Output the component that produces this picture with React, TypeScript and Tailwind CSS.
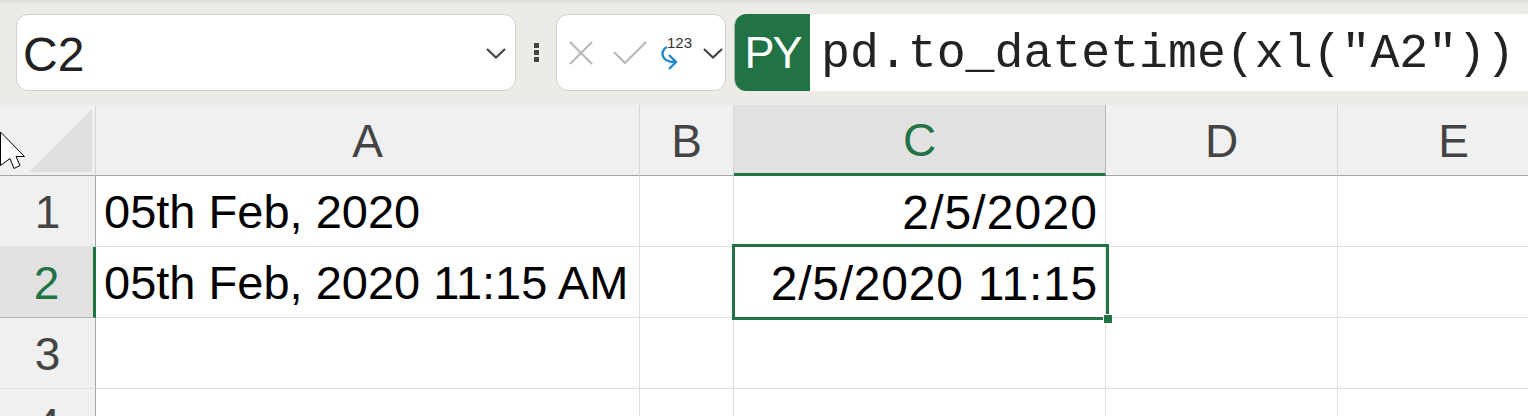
import React from "react";

const SANS = "font-['Liberation_Sans',sans-serif]";

const ColHeader = ({ label, active }: { label: string; active?: boolean }) => (
  <div
    className={
      active
        ? "flex items-center justify-center pt-[2px] bg-[#e1e1e1] border-r border-[#b5b5b5] border-b-[3px] border-b-[#217346] text-[#217346] text-[46px]"
        : "flex items-center justify-center pt-[2px] bg-[#f0f0f0] border-r border-[#d6d6d6] border-b border-b-[#a6a6a6] text-[#444444] text-[46px]"
    }
  >
    {label}
  </div>
);

const RowHeader = ({ label, active }: { label: string; active?: boolean }) => (
  <div
    className={
      active
        ? "flex items-center justify-center pt-[2px] bg-[#e1e1e1] border-r-[3px] border-[#217346] border-b border-b-[#b5b5b5] text-[#217346] text-[46px]"
        : "flex items-center justify-center pt-[2px] bg-[#f0f0f0] border-r border-[#a6a6a6] border-b border-b-[#e0e0e0] text-[#444444] text-[46px]"
    }
  >
    {label}
  </div>
);

const Cell = ({ children, right }: { children?: React.ReactNode; right?: boolean }) => (
  <div
    className={`flex items-center whitespace-nowrap overflow-visible pt-[3px] px-2 border-r border-b border-[#e0e0e0] text-black text-[47px] ${
      right ? "justify-end" : ""
    }`}
  >
    {children}
  </div>
);

const Chevron = () => (
  <svg width="22" height="14" viewBox="0 0 22 14" fill="none" stroke="#444444" strokeWidth="2.2">
    <path d="M2 3l9 8.500L20 3" />
  </svg>
);

const App = () => {
  return (
    <div className={`w-[1528px] h-[416px] overflow-hidden bg-white flex flex-col ${SANS}`}>
      {/* Formula bar */}
      <div className="relative h-[105px] shrink-0 bg-[#ecebe6] flex items-start pt-[14px] pl-4 shadow-[inset_0_5px_5px_-3px_#d8d8d4]">
        <div className="w-[500px] h-[77px] flex items-center justify-between bg-white border border-[#cfcfcf] rounded-xl pl-[6px] pr-2">
          <span className="text-[48px] pt-1 text-[#222222]">C2</span>
          <Chevron />
        </div>
        <div className="w-10 h-[77px] flex flex-col items-center justify-center gap-[2px] pb-[1px]">
          <span className="w-[5px] h-[5px] bg-[#444444]" />
          <span className="w-[5px] h-[5px] bg-[#444444]" />
          <span className="w-[5px] h-[5px] bg-[#444444]" />
        </div>
        <div className="relative w-[170px] h-[77px] flex items-center bg-white border border-[#cfcfcf] rounded-xl">
          <svg className="ml-[11px]" width="26" height="26" viewBox="0 0 26 26" fill="none" stroke="#b9b9b9" strokeWidth="2.2">
            <path d="M2 2l22 22M24 2L2 24" />
          </svg>
          <svg className="ml-[19px]" width="34" height="24" viewBox="0 0 34 24" fill="none" stroke="#b9b9b9" strokeWidth="2.2">
            <path d="M1 11l11 11L33 1" />
          </svg>
          <svg className="ml-[13px] self-start mt-[30px]" width="20" height="26" viewBox="0 0 20 26" fill="none" stroke="#1f8ad0" strokeWidth="2.4">
            <path d="M7 2C0 5 0 17 15 17" />
            <path d="M9 10l7 7-7 7" />
          </svg>
          <span className="absolute left-[110px] top-[17px] text-[15px] text-[#333333]">123</span>
          <span className="ml-[22px]"><Chevron /></span>
        </div>
        <div className="ml-2 flex-1 h-[77px] flex items-center bg-white rounded-l-xl overflow-hidden border-l border-[#a9b5ae]">
          <div className="w-[75px] h-full flex items-center justify-center bg-[#217346] text-white text-[45px] tracking-[-2px]">PY</div>
          <span className="ml-[11px] pt-1 font-['Liberation_Mono',monospace] text-[48.200px] text-[#222222] whitespace-nowrap">
            pd.to_datetime(xl("A2"))
          </span>
        </div>
      </div>

      {/* Sheet */}
      <div className="relative flex-1 grid grid-cols-[96px_544px_94px_372px_232px_232px] grid-rows-[71px_71px_71px_71px_71px]">
        <div className="relative bg-[#f0f0f0] border-r border-[#d6d6d6] border-b border-b-[#a6a6a6]">
          <div className="absolute right-[3px] bottom-[3px] w-[63px] h-[63px] bg-[#dfdfdf] [clip-path:polygon(100%_0,100%_100%,0_100%)]" />
          <svg className="absolute left-0 top-[26px]" width="26" height="40" viewBox="0 0 26 40" fill="white" stroke="black" strokeWidth="1">
            <path d="M0.5 1L24.500 25.500H16l4 9-6 3-4-10-9.500 7z" />
          </svg>
        </div>
        <ColHeader label="A" />
        <ColHeader label="B" />
        <ColHeader label="C" active />
        <ColHeader label="D" />
        <ColHeader label="E" />

        <RowHeader label="1" />
        <Cell>05th Feb, 2020</Cell>
        <Cell />
        <Cell right><span className="-mr-[1px] text-[48px] tracking-[1.100px]">2/5/2020</span></Cell>
        <Cell />
        <Cell />

        <RowHeader label="2" active />
        <Cell>05th Feb, 2020 11:15 AM</Cell>
        <Cell />
        <Cell right><span className="-mr-[1px] text-[48px] tracking-[0.750px]">2/5/2020 11:15</span></Cell>
        <Cell />
        <Cell />

        <RowHeader label="3" />
        <Cell />
        <Cell />
        <Cell />
        <Cell />
        <Cell />

        <RowHeader label="4" />
        <Cell />
        <Cell />
        <Cell />
        <Cell />
        <Cell />

        {/* Selected cell outline */}
        <div className="absolute left-[732px] top-[139px] w-[377px] h-[76px] border-[3px] border-[#217346] pointer-events-none">
          <span className="absolute -right-[6px] -bottom-[6px] w-2 h-2 bg-[#217346] outline outline-1 outline-white" />
        </div>
      </div>
    </div>
  );
};

export default App;
